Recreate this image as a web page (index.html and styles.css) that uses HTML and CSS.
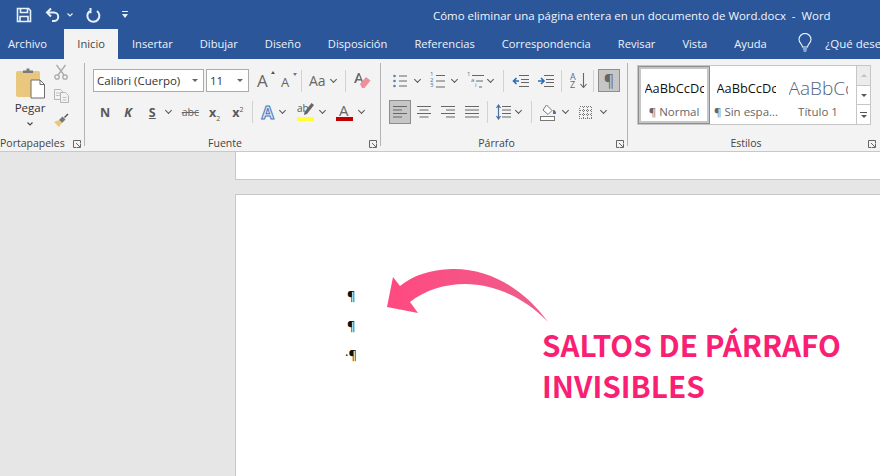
FILE: index.html
```html
<!DOCTYPE html>
<html lang="es">
<head>
    <meta charset="UTF-8">
    <title>Word</title>
    <link rel="stylesheet" href="styles.css">
</head>
<body>
    <div class="titlebar">
        <div class="qat">
            <svg class="qat-save" width="16" height="16" viewBox="0 0 16 16" fill="none" stroke="#e8f1fa" stroke-width="1.6"><path d="M1.500 1.500h11l2 2v11h-13z"/><path d="M4.500 1.500v4h7v-4M4 14.500v-5h8v5"/></svg>
            <svg class="qat-undo" width="16" height="16" viewBox="0 0 16 16" fill="none" stroke="#e8f1fa" stroke-width="2"><path d="M6 1.500 2 5.500l4 4"/><path d="M2.500 5.500h6.500a4.200 4.200 0 0 1 0 8.500H7"/></svg>
            <svg class="qat-chev" width="6" height="4" viewBox="0 0 6 4" fill="none" stroke="#e8f1fa" stroke-width="1.1"><path d="M.5.5 3 3 5.500.5"/></svg>
            <svg class="qat-redo" width="15" height="16" viewBox="0 0 15 16" fill="none" stroke="#e8f1fa" stroke-width="2"><path d="M3.500 4.200a6 6 0 1 0 7.500-.2"/><path d="M3 1v4.200h-2.500" transform="translate(1.500 0)"/></svg>
            <svg class="qat-more" width="6" height="7" viewBox="0 0 6 7" fill="#e8f1fa"><path d="M0 0h6v1H0zM0 3h6L3 7z"/></svg>
        </div>
        <div class="doc-title">Cómo eliminar una página entera en un documento de Word.docx&nbsp; -&nbsp; Word</div>
    </div>

    <div class="tabs">
        <div class="tab tab-file">Archivo</div>
        <div class="tab active">Inicio</div>
        <div class="tab">Insertar</div>
        <div class="tab">Dibujar</div>
        <div class="tab">Diseño</div>
        <div class="tab">Disposición</div>
        <div class="tab">Referencias</div>
        <div class="tab">Correspondencia</div>
        <div class="tab">Revisar</div>
        <div class="tab">Vista</div>
        <div class="tab">Ayuda</div>
        <svg class="bulb" width="14" height="20" viewBox="0 0 14 20" fill="none" stroke="#eef3fa" stroke-width="1.1"><path d="M4.500 14c0-3-3.500-4-3.500-7.500a6 6 0 0 1 12 0C13 10 9.500 11 9.500 14z"/><path d="M5 16h4M5.500 18h3"/></svg>
        <div class="tell">¿Qué desea</div>
    </div>

    <div class="ribbon">
        <!-- Portapapeles -->
        <div class="group group-clip">
            <div class="clip-body">
                <div class="paste">
                    <svg width="29" height="31" viewBox="0 0 29 31"><rect x="0" y="3" width="24" height="26" rx="2" fill="#eac77f"/><path d="M7 5V2.500h3.500V0.500h3V2.500H17V5z" fill="#7a7a7a"/><path d="M15 12h9l4.500 4.500V30H15z" fill="#fff" stroke="#6d6d6d"/><path d="M24 12v4.500h4.500" fill="none" stroke="#6d6d6d"/></svg>
                    <span class="paste-label">Pegar</span>
                    <svg width="6" height="4" viewBox="0 0 6 4" fill="none" stroke="#444" stroke-width="1.1"><path d="M.5.5 3 3 5.500.5"/></svg>
                </div>
                <div class="clip-tools">
                    <svg width="14" height="16" viewBox="0 0 14 16" fill="none" stroke="#a9a9a9" stroke-width="1.3"><path d="M2.500 1 10 11M11.500 1 4 11"/><circle cx="3" cy="13" r="2.200"/><circle cx="11" cy="13" r="2.200"/></svg>
                    <svg width="15" height="14" viewBox="0 0 15 14" fill="#f3f3f3" stroke="#b5b5b5"><path d="M.5.5h6l2 2v8h-8z"/><path d="M6.500 3.500h5l3 3v7h-8z"/><path d="M2 4h4M2 6.500h4M8.500 8.500h4M8.500 11h4" stroke-width=".8"/></svg>
                    <svg width="16" height="16" viewBox="0 0 16 16"><path d="m9.500 4.500 3 3-3.500 3.500-3-3z" fill="#777"/><path d="m6 8 3 3-3 4-5-5z" fill="#eac77f"/><path d="m11 5 3.500-3.500 1 1L12 6z" fill="#555"/></svg>
                </div>
            </div>
            <div class="group-label">Portapapeles</div>
            <svg class="launcher" width="8" height="8" viewBox="0 0 8 8" fill="none" stroke="#666"><path d="M7.500 3.500V.500H.5v7h3"/><path d="m3 3 4 4M7.500 4v3.500H4"/></svg>
        </div>

        <!-- Fuente -->
        <div class="group group-font">
            <div class="tool-row">
                <div class="combo combo-font">Calibri (Cuerpo)<span class="combo-arrow"></span></div>
                <div class="combo combo-size">11<span class="combo-arrow"></span></div>
                <div class="ico w-grow"><span class="big-a">A</span><span class="tri tri-up"></span></div>
                <div class="ico w-shrink"><span class="small-a">A</span><span class="tri tri-down"></span></div>
                <div class="sep sep-a"></div>
                <div class="case">Aa</div><i class="chev"></i>
                <div class="sep sep-b"></div>
                <svg class="eraser" width="17" height="18" viewBox="0 0 17 18"><path d="M0 11 4 1h1.500l4 10H8L7 8.500H3L2 11zM3.500 7h3L5 3z" fill="#6a6a6a"/><path d="m6 12 6-7 4.500 3.500-6 7.500H8z" fill="#ee8f9a"/></svg>
            </div>
            <div class="tool-row row-two">
                <b class="fmt f-n">N</b>
                <b class="fmt f-k">K</b>
                <b class="fmt f-s">S</b><i class="chev c-s"></i>
                <span class="abc">abc</span>
                <b class="fmt f-sub">x<sub>2</sub></b>
                <b class="fmt f-sup">x<sup>2</sup></b>
                <div class="sep sep-c"></div>
                <span class="fx">A</span><i class="chev c-fx"></i>
                <div class="marker"><span class="marker-text">ab</span><svg class="marker-pen" width="10" height="12" viewBox="0 0 10 12"><path d="M7.500 0 10 2 3 11 0 12l.5-3z" fill="#666"/></svg><span class="bar bar-yellow"></span></div><i class="chev c-hl"></i>
                <div class="marker m-color"><span class="color-a">A</span><span class="bar bar-red"></span></div><i class="chev c-col"></i>
            </div>
            <div class="group-label">Fuente</div>
            <svg class="launcher" width="8" height="8" viewBox="0 0 8 8" fill="none" stroke="#666"><path d="M7.500 3.500V.500H.5v7h3"/><path d="m3 3 4 4M7.500 4v3.500H4"/></svg>
        </div>

        <!-- Parrafo -->
        <div class="group group-para">
            <div class="tool-row">
                <svg class="p-bul" width="14" height="14" viewBox="0 0 14 14" stroke="#666" fill="#5c7fa8"><circle cx="1.500" cy="2" r="1.300" stroke="none"/><circle cx="1.500" cy="7" r="1.300" stroke="none"/><circle cx="1.500" cy="12" r="1.300" stroke="none"/><path d="M6 2h8M6 7h8M6 12h8"/></svg><i class="chev c-bul"></i>
                <div class="list-ico"><span class="list-nums">1<br>2<br>3</span><svg width="9" height="16" viewBox="0 0 9 16" stroke="#666"><path d="M0 2.500h9M0 8h9M0 14h9"/></svg></div><i class="chev c-num"></i>
                <div class="list-ico multi"><span class="list-nums"><span>1</span><br><span class="lvl-2">a</span><br><span class="lvl-3">i</span></span><svg width="12" height="16" viewBox="0 0 12 16" stroke="#666"><path d="M0 2.500h12M4 8h7M7 14h3"/></svg></div><i class="chev c-multi"></i>
                <div class="sep sep-d"></div>
                <svg class="p-out" width="17" height="12" viewBox="0 0 17 12" stroke="#666"><path d="M7 .5h10M9 4.500h8M9 7.500h8M7 11.500h10"/><path d="M7 6H2M4.500 3 1.500 6l3 3" fill="none" stroke="#2b6cb0" stroke-width="1.600"/></svg>
                <svg class="p-ind" width="17" height="12" viewBox="0 0 17 12" stroke="#666"><path d="M7 .5h10M9 4.500h8M9 7.500h8M7 11.500h10"/><path d="M1 6h5M4 3l3 3-3 3" fill="none" stroke="#2b6cb0" stroke-width="1.600"/></svg>
                <div class="sep sep-e"></div>
                <div class="sort-ico"><span class="sort-letters"><span class="sort-a">A</span><br>Z</span><svg width="7" height="15" viewBox="0 0 7 15" fill="none" stroke="#666" stroke-width="1.100"><path d="M3.500 0v14M.5 11l3 3.500 3-3.500"/></svg></div>
                <div class="sep sep-f"></div>
                <div class="pilcrow-btn">¶</div>
            </div>
            <div class="tool-row row-two">
                <div class="align-on"><svg width="14" height="12" viewBox="0 0 14 12" stroke="#666"><path d="M0 .5h14M0 4h9M0 7.500h14M0 11h9"/></svg></div>
                <svg class="a-center" width="14" height="12" viewBox="0 0 14 12" stroke="#666"><path d="M0 .5h14M2.500 4h9M0 7.500h14M2.500 11h9"/></svg>
                <svg class="a-right" width="14" height="12" viewBox="0 0 14 12" stroke="#666"><path d="M0 .5h14M5 4h9M0 7.500h14M5 11h9"/></svg>
                <svg class="a-just" width="14" height="12" viewBox="0 0 14 12" stroke="#666"><path d="M0 .5h14M0 4h14M0 7.500h14M0 11h14"/></svg>
                <div class="sep sep-g"></div>
                <svg class="a-space" width="15" height="16" viewBox="0 0 15 16" stroke="#666"><path d="M6 2.500h9M6 6h9M6 9.500h9M6 13h9"/><path d="M2.500 1v14M.5 4l2-3 2 3M.5 12l2 3 2-3" fill="none" stroke="#4a6f9c" stroke-width="1.200"/></svg><i class="chev c-space"></i>
                <div class="sep sep-h"></div>
                <svg class="a-shade" width="17" height="17" viewBox="0 0 17 17" fill="none" stroke="#777"><path d="m6.500 1 5.500 5.500-4 4L3 6z" fill="#fff"/><path d="M13 6c2 0 3 1.500 3 4h-3z" fill="#4a6f9c" stroke="none"/><rect x=".5" y="12.500" width="14" height="4" fill="#fff"/></svg><i class="chev c-shade"></i>
                <svg class="a-border" width="13" height="13" viewBox="0 0 13 13" fill="none" stroke="#777" stroke-dasharray="1 1" shape-rendering="crispEdges"><path d="M.5.5h12v12H.5zM4.500.5v12M8.500.5v12M.5 4.500h12M.5 8.500h12"/></svg><i class="chev c-border"></i>
            </div>
            <div class="group-label">Párrafo</div>
            <svg class="launcher" width="8" height="8" viewBox="0 0 8 8" fill="none" stroke="#666"><path d="M7.500 3.500V.500H.5v7h3"/><path d="m3 3 4 4M7.500 4v3.500H4"/></svg>
        </div>

        <!-- Estilos -->
        <div class="group group-styles">
            <div class="gallery">
                <div class="style-item selected">
                    <div class="sample">AaBbCcDc</div>
                    <div class="style-name">¶ Normal</div>
                </div>
                <div class="style-item">
                    <div class="sample">AaBbCcDc</div>
                    <div class="style-name">¶ Sin espa...</div>
                </div>
                <div class="style-item">
                    <div class="sample sample-title">AaBbCc</div>
                    <div class="style-name">Título 1</div>
                </div>
                <div class="gallery-scroll">
                    <div class="scroll-btn scroll-off"><span class="tri-s tri-s-up"></span></div>
                    <div class="scroll-btn"><span class="tri-s"></span></div>
                    <div class="scroll-btn"><span class="more-line"></span><span class="tri-s"></span></div>
                </div>
            </div>
            <div class="group-label">Estilos</div>
            <svg class="launcher" width="8" height="8" viewBox="0 0 8 8" fill="none" stroke="#666"><path d="M7.500 3.500V.500H.5v7h3"/><path d="m3 3 4 4M7.500 4v3.500H4"/></svg>
        </div>
    </div>

    <div class="workspace">
        <div class="page-end"></div>
        <div class="page">
            <div class="mark">¶</div>
            <div class="mark">¶</div>
            <div class="mark mark-dot">·¶</div>
        </div>

        <svg class="arrow" width="170" height="60" viewBox="385 266 170 60">
            <defs>
                <linearGradient id="arrowfill" x1="0" x2="1" y1="0" y2="0">
                    <stop offset="0" stop-color="#ff4a80"/>
                    <stop offset="1" stop-color="#ee5d8b"/>
                </linearGradient>
            </defs>
            <path fill="url(#arrowfill)" d="M548 322C525 290 490 268 452 269 430 269.500 412 276 400 286L393 277 387 307 418 313 410 302C425 290 445 284 465 284 495 284 525 298 548 322Z"/>
        </svg>
        <div class="callout">SALTOS DE PÁRRAFO<br>INVISIBLES</div>
    </div>
</body>
</html>
```

FILE: styles.css
```css
* {
    box-sizing: border-box;
}
body {
    margin: 0;
    width: 880px;
    height: 476px;
    overflow: hidden;
    font-family: "Open Sans", "Noto Sans", sans-serif;
    background: #e6e6e6;
    color: #444;
}

/* title bar */
.titlebar {
    height: 29px;
    background: #2b579a;
    display: flex;
    align-items: center;
    position: relative;
}
.qat {
    display: flex;
    align-items: center;
    padding-left: 16px;
}
.qat-undo { margin-left: 13px; }
.qat-chev { margin-left: 6px; }
.qat-redo { margin-left: 13px; }
.qat-more { margin-left: 21px; }
.doc-title {
    margin-left: 305px;
    font-size: 11.45px;
    color: #f2f5fa;
    white-space: nowrap;
    padding-top: 1px;
}

/* tabs */
.tabs {
    height: 30px;
    background: #2b579a;
    display: flex;
    align-items: stretch;
    white-space: nowrap;
    overflow: hidden;
}
.tab {
    padding: 0 13.5px;
    font-size: 11.15px;
    line-height: 30px;
    color: #eef3fa;
    flex: none;
}
.tab-file {
    padding: 0 17px 0 8px;
}
.tab.active {
    background: #f3f3f3;
    color: #444;
}
.bulb {
    flex: none;
    margin: 4px 0 0 18px;
}
.tell {
    margin-left: 13px;
    font-size: 11.5px;
    line-height: 30px;
    color: #eef3fa;
}

/* ribbon */
.ribbon {
    height: 93px;
    background: #f3f3f3;
    border-bottom: 1px solid #c8c8c8;
    display: flex;
}
.group {
    position: relative;
    height: 92px;
    flex: none;
}
.group::after {
    content: "";
    position: absolute;
    right: 0;
    top: 4px;
    bottom: 5px;
    width: 1px;
    background: #b4b4b4;
}
.group-styles::after {
    display: none;
}
.group-label {
    position: absolute;
    left: 0;
    right: 16px;
    top: 77px;
    text-align: center;
    font-size: 10.5px;
    line-height: 15px;
    color: #444;
}
.launcher {
    position: absolute;
    right: 4px;
    top: 81px;
}
.group-clip { width: 85px; }
.group-font { width: 296px; padding-left: 8px; }
.group-para { width: 247px; padding-left: 8px; }
.group-styles { width: 252px; padding: 6px 0 0 9px; }
.group-clip .group-label { left: 0; right: auto; white-space: nowrap; }
.group-clip .launcher { right: 4px; }

.clip-body {
    display: flex;
}
.paste {
    width: 60px;
    display: flex;
    flex-direction: column;
    align-items: center;
    padding-top: 9px;
    font-size: 11.5px;
}
.paste-label {
    margin-top: 1px;
    line-height: 16px;
    color: #333;
}
.paste svg:last-child {
    margin-top: 6px;
}
.clip-tools {
    display: flex;
    flex-direction: column;
    align-items: center;
    padding-top: 5px;
    margin-left: -7px;
    gap: 9px;
}

.tool-row {
    height: 23px;
    margin-top: 10px;
    display: flex;
    align-items: center;
}
.row-two {
    margin-top: 8px;
    height: 24px;
}
.sep {
    width: 1px;
    height: 22px;
    background: #d2d2d2;
    flex: none;
}

/* font controls */
.combo {
    height: 23px;
    background: #fff;
    border: 1px solid #ababab;
    font-size: 11.5px;
    line-height: 21px;
    padding-left: 3px;
    color: #333;
    position: relative;
    white-space: nowrap;
    overflow: hidden;
    flex: none;
}
.combo-font { width: 111px; }
.combo-size { width: 43px; margin-left: 2px; }
.combo-arrow {
    position: absolute;
    right: 5px;
    top: 9px;
    border: 3px solid transparent;
    border-top: 3px solid #666;
}
.ico {
    position: relative;
    flex: none;
    display: flex;
    align-items: center;
}
.w-grow { margin-left: 8px; width: 16px; }
.w-shrink { margin-left: 8px; width: 12px; }
.big-a { font-size: 17px; color: #666; }
.small-a { font-size: 13px; color: #666; padding-top: 3px; }
.tri {
    position: absolute;
    right: -1px;
    top: 3px;
    border: 2.500px solid transparent;
}
.tri-up { border-bottom: 3px solid #555; top: 0; right: -2px; }
.tri-down { border-top: 3px solid #7b68a8; right: -4px; top: 3px; }
.sep-a { margin-left: 8px; }
.case {
    margin-left: 7px;
    font-size: 14px;
    color: #666;
}
.chev {
    display: block;
    flex: none;
    width: 5px;
    height: 5px;
    border-right: 1.200px solid #555;
    border-bottom: 1.200px solid #555;
    transform: rotate(45deg);
    margin: -3px 0 0 5px;
}
.sep-b { margin-left: 9px; }
.eraser { margin-left: 8px; }

.fmt {
    font-size: 12.500px;
    color: #595959;
    flex: none;
    font-style: normal;
}
.f-n { margin-left: 7px; }
.f-k { margin-left: 14px; font-style: italic; }
.f-s { margin-left: 17px; text-decoration: underline; }
.c-s { margin-left: 10px; }
.abc {
    margin-left: 11px;
    font-size: 10.500px;
    color: #666;
    text-decoration: line-through;
}
.f-sub { margin-left: 10px; }
.f-sup { margin-left: 12px; }
.fmt sub, .fmt sup {
    font-size: 7px;
    font-weight: 400;
    line-height: 0;
}
.sep-c { margin-left: 8px; }
.fx {
    margin-left: 9px;
    font-size: 18px;
    font-weight: 700;
    line-height: 20px;
    color: #dbe7f7;
    -webkit-text-stroke: 1px #4a78b8;
}
.c-fx { margin-left: 6px; }
.marker {
    margin-left: 12px;
    width: 17px;
    height: 20px;
    position: relative;
    flex: none;
}
.marker-text {
    position: absolute;
    left: 0;
    top: 0;
    font-size: 10px;
    line-height: 12px;
    color: #555;
}
.marker-pen {
    position: absolute;
    right: 0;
    top: 1px;
}
.bar {
    position: absolute;
    left: 0;
    right: 0;
    bottom: 1px;
    height: 4px;
}
.bar-yellow { background: #ffff33; }
.bar-red { background: #c00000; }
.c-hl { margin-left: 6px; }
.m-color { margin-left: 11px; }
.color-a {
    position: absolute;
    left: 3px;
    top: -2px;
    font-size: 15px;
    line-height: 20px;
    color: #666;
}
.c-col { margin-left: 6px; }

/* paragraph controls */
.p-bul { margin-left: 4px; flex: none; }
.c-bul { margin-left: 8px; }
.list-ico {
    display: flex;
    flex: none;
    align-items: center;
    gap: 2px;
    margin-left: 10px;
    width: 15px;
}
.list-nums {
    display: block;
    font-size: 6px;
    line-height: 5.500px;
    color: #4a6f9c;
    white-space: nowrap;
    width: 4px;
}
.multi {
    width: 18px;
    gap: 1px;
}
.lvl-2 { margin-left: 4px; }
.lvl-3 { margin-left: 8px; }
.c-num { margin-left: 7px; }
.c-multi { margin-left: 3px; }
.sep-d { margin-left: 10px; }
.p-out { margin-left: 8px; flex: none; }
.p-ind { margin-left: 8px; flex: none; }
.sep-e { margin-left: 7px; }
.sort-ico {
    display: flex;
    flex: none;
    align-items: center;
    gap: 3px;
    margin-left: 8px;
}
.sort-letters {
    display: block;
    font-size: 9px;
    line-height: 8px;
    color: #666;
    width: 7px;
}
.sort-a { color: #4a6f9c; }
.sep-f { margin-left: 6px; }
.pilcrow-btn {
    margin-left: 4px;
    width: 22px;
    height: 23px;
    background: #c6c6c6;
    border: 1px solid #8e8e8e;
    text-align: center;
    font-size: 16px;
    line-height: 20px;
    color: #666;
    flex: none;
}
.align-on {
    width: 22px;
    height: 24px;
    background: #c6c6c6;
    border: 1px solid #8e8e8e;
    display: flex;
    align-items: center;
    justify-content: center;
    flex: none;
}
.a-center { margin-left: 6px; }
.a-right { margin-left: 10px; }
.a-just { margin-left: 10px; }
.sep-g { margin-left: 8px; }
.a-space { margin-left: 8px; }
.c-space { margin-left: 5px; }
.sep-h { margin-left: 10px; }
.a-shade { margin-left: 8px; }
.c-shade { margin-left: 6px; }
.a-border { margin-left: 11px; }
.c-border { margin-left: 9px; }

/* styles gallery */
.gallery {
    width: 234px;
    height: 60px;
    background: #fff;
    border: 1px solid #c6c6c6;
    display: flex;
}
.style-item {
    width: 72px;
    flex: none;
    overflow: hidden;
    text-align: center;
    padding-top: 12px;
}
.selected {
    border: 3px solid #c6c6c6;
    outline: 1px solid #8e8e8e;
    outline-offset: -1px;
    padding-top: 9px;
    height: 58px;
}
.sample {
    font-size: 12.800px;
    line-height: 20px;
    color: #111;
    white-space: nowrap;
    width: 59px;
    margin: 0 auto;
    overflow: hidden;
    text-align: left;
}
.sample-title {
    font-size: 19px;
    font-weight: 300;
    color: #56657a;
}
.style-name {
    margin-top: 7px;
    font-size: 11.500px;
    line-height: 14px;
    color: #666;
    white-space: nowrap;
}
.gallery-scroll {
    margin-left: auto;
    width: 14px;
    display: flex;
    flex-direction: column;
    border-left: 1px solid #c6c6c6;
}
.scroll-btn {
    flex: 1;
    border-bottom: 1px solid #c6c6c6;
    display: flex;
    flex-direction: column;
    align-items: center;
    justify-content: center;
    gap: 2px;
}
.scroll-btn:last-child { border-bottom: 0; }
.scroll-off { background: #ececec; }
.tri-s {
    border: 3px solid transparent;
    border-top: 3px solid #555;
    border-bottom: 0;
}
.tri-s-up {
    border-top: 0;
    border-bottom: 3px solid #c2c2c2;
}
.more-line {
    width: 7px;
    height: 1px;
    background: #555;
}

/* document */
.workspace {
    position: relative;
    height: 324px;
    padding-left: 235px;
    background: #e6e6e6;
}
.page-end {
    height: 28px;
    background: #fff;
    border-left: 1px solid #c8c8c8;
    border-bottom: 1px solid #c8c8c8;
}
.page {
    margin-top: 14px;
    height: 282px;
    background: #fff;
    border-left: 1px solid #c8c8c8;
    border-top: 1px solid #c8c8c8;
    padding: 87px 0 0 111px;
}
.mark {
    height: 29.500px;
    font-family: "Open Sans", sans-serif;
    font-size: 13px;
    line-height: 29.500px;
    color: #111;
}
.mark-dot {
    margin-left: -2px;
}
.arrow {
    position: absolute;
    left: 385px;
    top: 114px;
}
.callout {
    position: absolute;
    left: 542px;
    top: 172px;
    font-family: "Noto Sans CJK JP", sans-serif;
    font-weight: 700;
    font-size: 29.700px;
    line-height: 41px;
    color: #f91f74;
    white-space: nowrap;
}
```
